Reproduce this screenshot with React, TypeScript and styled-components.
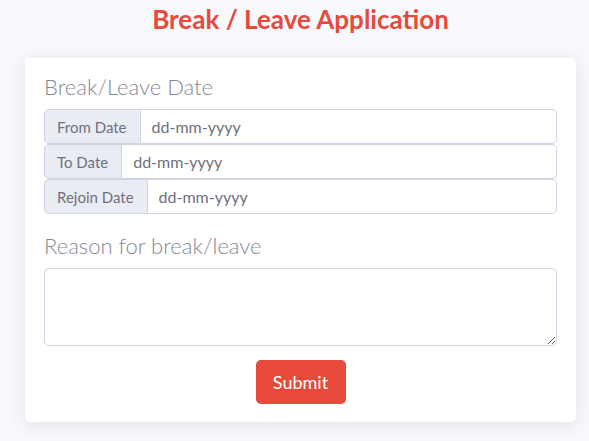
import styled, { createGlobalStyle } from "styled-components";

const GlobalStyle = createGlobalStyle`
  * {
    box-sizing: border-box;
  }
  body {
    margin: 0;
    background: #f8f9fc;
    font-family: "Lato", "Open Sans", sans-serif;
    color: #6e707e;
  }
`;

const Page = styled.div`
  padding: 4px 13px 19px 25px;
`;

const Title = styled.h3`
  margin: 0 0 24px;
  text-align: center;
  color: #e74a3b;
  font-size: 26px;
  font-weight: 700;
  line-height: 30px;
`;

const Card = styled.form`
  background: #fff;
  border-radius: 5px;
  box-shadow: 0 3px 18px rgba(58, 59, 69, 0.12);
  padding: 17px 19px 18px;
  display: flex;
  flex-direction: column;
`;

const SectionLabel = styled.h5<{ $top?: number }>`
  margin: ${(p) => p.$top ?? 0}px 0 10px;
  font-size: 22px;
  line-height: 24px;
  font-weight: 300;
  color: #858796;
`;

const Group = styled.div`
  display: flex;
  height: 35px;
`;

const Addon = styled.span`
  display: flex;
  align-items: center;
  padding: 0 13px 0 12px;
  background: #eaecf4;
  border: 1px solid #d1d3e2;
  border-radius: 5px 0 0 5px;
  font-size: 15px;
  color: #6e707e;
  white-space: nowrap;
`;

const DateInput = styled.input`
  flex: 1;
  min-width: 0;
  border: 1px solid #d1d3e2;
  border-left: none;
  border-radius: 0 5px 5px 0;
  padding: 0 11px;
  font-family: inherit;
  font-size: 16px;
  color: #6e707e;
  outline: none;
  &::placeholder {
    color: #6e707e;
  }
`;

const Reason = styled.textarea`
  height: 78px;
  border: 1px solid #d1d3e2;
  border-radius: 5px;
  resize: vertical;
  font-family: inherit;
  font-size: 16px;
  outline: none;
`;

const Actions = styled.div`
  display: flex;
  justify-content: center;
  margin-top: 14px;
`;

const SubmitButton = styled.button`
  width: 90px;
  height: 44px;
  border: none;
  border-radius: 5px;
  background: #e74a3b;
  color: #fff;
  font-family: inherit;
  font-size: 18px;
  cursor: pointer;
`;

const dates = ["From Date", "To Date", "Rejoin Date"];

const App = () => {
  return (
    <>
      <GlobalStyle />
      <Page>
        <Title>Break / Leave Application</Title>
        <Card onSubmit={(e) => e.preventDefault()}>
          <SectionLabel>Break/Leave Date</SectionLabel>
          {dates.map((label) => (
            <Group key={label}>
              <Addon>{label}</Addon>
              <DateInput type="text" placeholder="dd-mm-yyyy" />
            </Group>
          ))}
          <SectionLabel $top={20}>Reason for break/leave</SectionLabel>
          <Reason />
          <Actions>
            <SubmitButton type="submit">Submit</SubmitButton>
          </Actions>
        </Card>
      </Page>
    </>
  );
};

export default App;
